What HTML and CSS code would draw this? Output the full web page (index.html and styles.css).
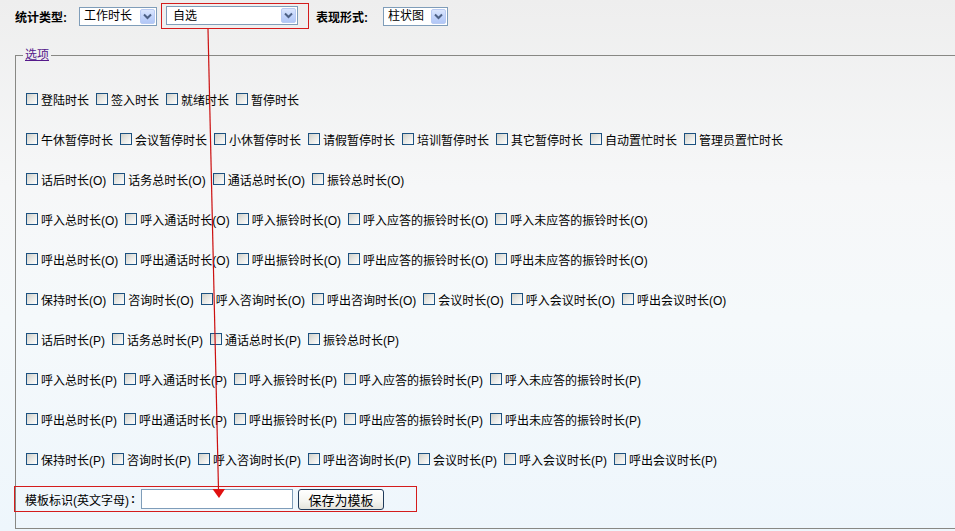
FILE: index.html
```html
<!DOCTYPE html>
<html lang="zh-CN">
<head>
  <meta charset="UTF-8">
  <meta name="viewport" content="width=device-width, initial-scale=1.0">
  <title>统计选项</title>
  <link rel="stylesheet" href="styles.css">
</head>
<body>
  <div class="toolbar">
    <b class="cap">统计类型:</b>
    <span class="combo combo-type">
      <select><option>工作时长</option></select>
      <span class="drop"><svg width="9" height="7" viewBox="0 0 9 7"><path d="M1 1.5 L4.5 5 L8 1.5" fill="none" stroke="#4d6185" stroke-width="2"/></svg></span>
    </span>
    <span class="mark">
      <span class="combo combo-mode">
        <select><option>自选</option></select>
        <span class="drop"><svg width="9" height="7" viewBox="0 0 9 7"><path d="M1 1.5 L4.5 5 L8 1.5" fill="none" stroke="#4d6185" stroke-width="2"/></svg></span>
      </span>
    </span>
    <b class="cap cap-mode">表现形式:</b>
    <span class="combo combo-chart">
      <select><option>柱状图</option></select>
      <span class="drop"><svg width="9" height="7" viewBox="0 0 9 7"><path d="M1 1.5 L4.5 5 L8 1.5" fill="none" stroke="#4d6185" stroke-width="2"/></svg></span>
    </span>
  </div>

  <fieldset class="opts">
    <legend><a href="#">选项</a></legend>

    <div class="row">
      <label><input type="checkbox">登陆时长</label>
      <label><input type="checkbox">签入时长</label>
      <label><input type="checkbox">就绪时长</label>
      <label><input type="checkbox">暂停时长</label>
    </div>
    <div class="row">
      <label><input type="checkbox">午休暂停时长</label>
      <label><input type="checkbox">会议暂停时长</label>
      <label><input type="checkbox">小休暂停时长</label>
      <label><input type="checkbox">请假暂停时长</label>
      <label><input type="checkbox">培训暂停时长</label>
      <label><input type="checkbox">其它暂停时长</label>
      <label><input type="checkbox">自动置忙时长</label>
      <label><input type="checkbox">管理员置忙时长</label>
    </div>
    <!-- (O) -->
    <div class="row">
      <label><input type="checkbox">话后时长(O)</label>
      <label><input type="checkbox">话务总时长(O)</label>
      <label><input type="checkbox">通话总时长(O)</label>
      <label><input type="checkbox">振铃总时长(O)</label>
    </div>
    <div class="row">
      <label><input type="checkbox">呼入总时长(O)</label>
      <label><input type="checkbox">呼入通话时长(O)</label>
      <label><input type="checkbox">呼入振铃时长(O)</label>
      <label><input type="checkbox">呼入应答的振铃时长(O)</label>
      <label><input type="checkbox">呼入未应答的振铃时长(O)</label>
    </div>
    <div class="row">
      <label><input type="checkbox">呼出总时长(O)</label>
      <label><input type="checkbox">呼出通话时长(O)</label>
      <label><input type="checkbox">呼出振铃时长(O)</label>
      <label><input type="checkbox">呼出应答的振铃时长(O)</label>
      <label><input type="checkbox">呼出未应答的振铃时长(O)</label>
    </div>
    <div class="row">
      <label><input type="checkbox">保持时长(O)</label>
      <label><input type="checkbox">咨询时长(O)</label>
      <label><input type="checkbox">呼入咨询时长(O)</label>
      <label><input type="checkbox">呼出咨询时长(O)</label>
      <label><input type="checkbox">会议时长(O)</label>
      <label><input type="checkbox">呼入会议时长(O)</label>
      <label><input type="checkbox">呼出会议时长(O)</label>
    </div>
    <!-- (P) -->
    <div class="row">
      <label><input type="checkbox">话后时长(P)</label>
      <label><input type="checkbox">话务总时长(P)</label>
      <label><input type="checkbox">通话总时长(P)</label>
      <label><input type="checkbox">振铃总时长(P)</label>
    </div>
    <div class="row">
      <label><input type="checkbox">呼入总时长(P)</label>
      <label><input type="checkbox">呼入通话时长(P)</label>
      <label><input type="checkbox">呼入振铃时长(P)</label>
      <label><input type="checkbox">呼入应答的振铃时长(P)</label>
      <label><input type="checkbox">呼入未应答的振铃时长(P)</label>
    </div>
    <div class="row">
      <label><input type="checkbox">呼出总时长(P)</label>
      <label><input type="checkbox">呼出通话时长(P)</label>
      <label><input type="checkbox">呼出振铃时长(P)</label>
      <label><input type="checkbox">呼出应答的振铃时长(P)</label>
      <label><input type="checkbox">呼出未应答的振铃时长(P)</label>
    </div>
    <div class="row">
      <label><input type="checkbox">保持时长(P)</label>
      <label><input type="checkbox">咨询时长(P)</label>
      <label><input type="checkbox">呼入咨询时长(P)</label>
      <label><input type="checkbox">呼出咨询时长(P)</label>
      <label><input type="checkbox">会议时长(P)</label>
      <label><input type="checkbox">呼入会议时长(P)</label>
      <label><input type="checkbox">呼出会议时长(P)</label>
    </div>

    <div class="save">
      <label class="save-label">模板标识(英文字母)<b class="colon">:</b><input type="text" class="tpl-name"></label>
      <button type="button" class="btn">保存为模板</button>
    </div>
  </fieldset>

  <!-- annotation arrow -->
  <svg class="arrow" width="955" height="531" viewBox="0 0 955 531">
    <line x1="208" y1="29" x2="218.5" y2="490" stroke="#cc1010" stroke-width="1.2"/>
    <polygon points="212.5,489 225,489 219,498" fill="#e01010"/>
  </svg>
</body>
</html>
```

FILE: styles.css
```css
  html {
    overflow: hidden;
    min-height: 100%;
    background: linear-gradient(to bottom, #eeeeee 0, #f6f7f8 35%, #f5f9fb 60%, #eef6fc 100%);
  }

  body {
    margin: 0;
    padding: 3px 0 0 15px;
    font-size: 12px;
    font-family: "Liberation Sans", "Noto Sans CJK SC", sans-serif;
    color: #000;
    position: relative;
    height: 528px;
  }

  .toolbar {
    display: flex;
    align-items: center;
    height: 26px;
  }

  .cap {
    font-weight: bold;
    white-space: nowrap;
  }

  .combo {
    display: inline-flex;
    align-items: center;
    height: 19px;
    box-sizing: border-box;
    border: 1px solid #7f9db9;
    background: white;
  }

  .combo select {
    appearance: none;
    -webkit-appearance: none;
    border: 0;
    background: transparent;
    font: inherit;
    color: #000;
    padding: 0 0 0 4px;
    margin: 0;
    height: 17px;
    flex: 1;
    min-width: 0;
    outline: none;
  }

  .drop {
    width: 15px;
    height: 15px;
    margin-right: 1px;
    box-sizing: border-box;
    border: 1px solid #b9cbf3;
    border-radius: 2px;
    background: linear-gradient(to bottom, #dbe6fd 0, #c2d4fb 50%, #b2c7f6 100%);
    display: flex;
    align-items: center;
    justify-content: center;
  }

  .combo-type {
    width: 78px;
    margin-left: 12px;
  }

  .mark {
    display: inline-flex;
    align-items: center;
    height: 26px;
    box-sizing: border-box;
    width: 148px;
    margin-left: 4px;
    padding-left: 4px;
    border: 1px solid #d41c1c;
  }

  .combo-mode {
    width: 132px;
    margin-top: -1px;
  }

  .combo-mode select {
    padding-left: 6px;
  }

  .cap-mode {
    margin-left: 7px;
  }

  .combo-chart {
    width: 65px;
    margin-left: 15px;
  }

  .opts {
    margin: 19px -20px 0 0;
    padding: 17px 0 16px 7px;
    border: 1px solid #888884;
    border-right: 0;
  }

  .opts legend {
    padding: 0 2px;
    line-height: 14px;
  }

  .opts legend a {
    color: #551a8b;
  }

  .row {
    height: 40px;
    display: flex;
    align-items: center;
    white-space: nowrap;
  }

  .row label {
    display: flex;
    align-items: center;
    margin-right: 4px;
  }

  .row input {
    appearance: none;
    -webkit-appearance: none;
    width: 12px;
    height: 12px;
    box-sizing: border-box;
    margin: 0 3px;
    border: 1px solid #1c5180;
    background: linear-gradient(135deg, #cfcfc8 0, #e6e6e2 45%, #ffffff 100%);
  }

  .save {
    margin: 7px 0 0 -9px;
    width: 403px;
    height: 26px;
    box-sizing: border-box;
    padding-left: 10px;
    border: 1px solid #d41c1c;
    display: flex;
    align-items: center;
  }

  .save-label {
    display: flex;
    align-items: center;
  }

  .colon {
    margin-left: 2px;
  }

  .tpl-name {
    width: 152px;
    height: 20px;
    box-sizing: border-box;
    margin: 0 0 0 6px;
    border: 1px solid #7f9db9;
    background: white;
    padding: 0 3px;
    font: inherit;
  }

  .btn {
    margin-left: 5px;
    width: 86px;
    height: 21px;
    box-sizing: border-box;
    border: 1px solid #1f3a5a;
    border-radius: 3px;
    background: linear-gradient(to bottom, #ffffff 0, #f4f4f0 60%, #e4e3dc 100%);
    font: inherit;
    font-size: 13px;
    color: #000;
    padding: 0;
  }

  .arrow {
    position: absolute;
    top: 0;
    left: 0;
    pointer-events: none;
  }
```
